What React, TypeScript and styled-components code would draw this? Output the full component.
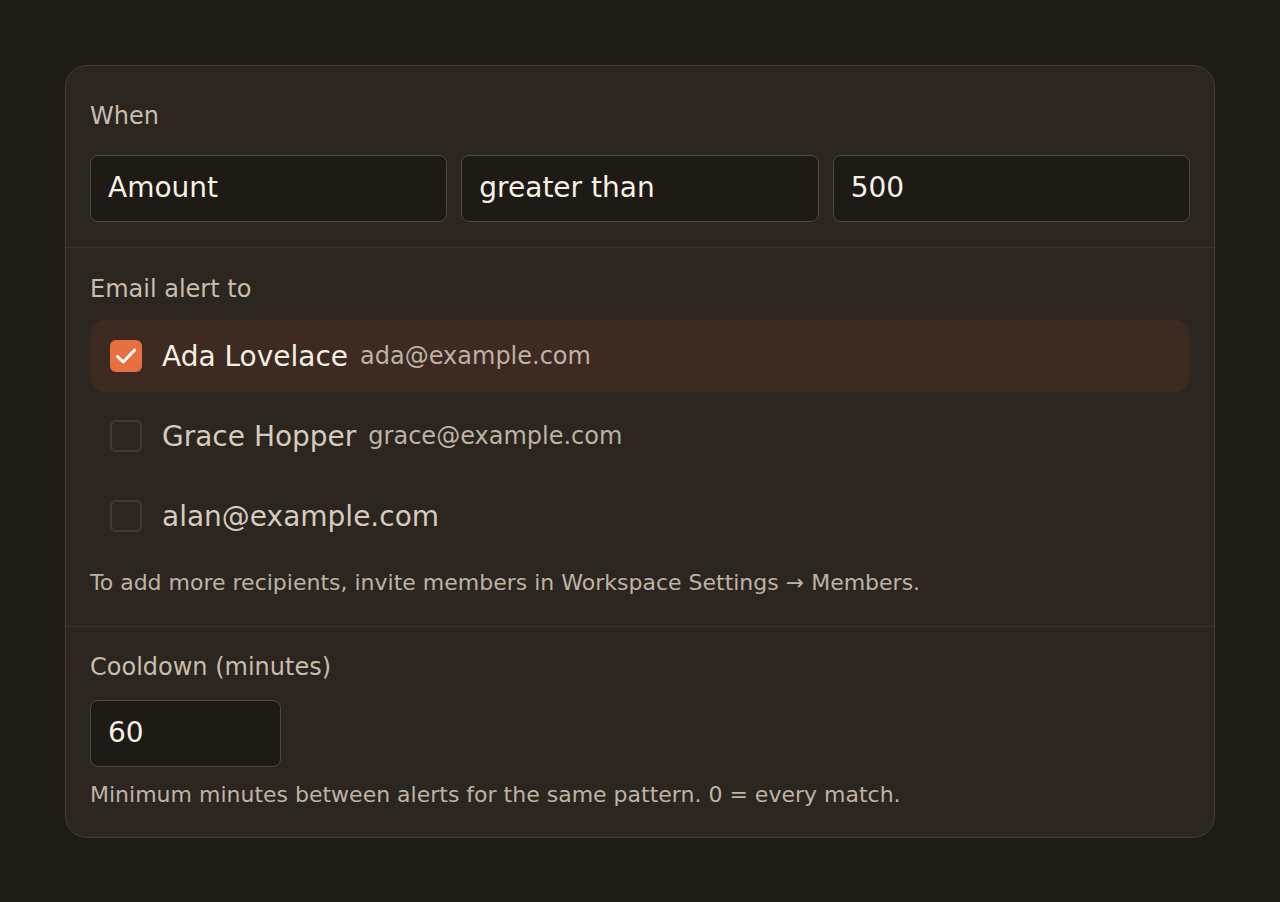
import React, { useState } from "react";
import styled, { createGlobalStyle } from "styled-components";

const GlobalStyle = createGlobalStyle`
  html, body {
    margin: 0;
    padding: 0;
    background: #1f1b17;
  }
  body {
    font-family: "DejaVu Sans", "Noto Sans", sans-serif;
    -webkit-font-smoothing: antialiased;
  }
  * { box-sizing: border-box; }
`;

const Page = styled.div`
  padding: 65px;
  min-height: 902px;
  background: #1f1b17;
`;

const Card = styled.div`
  background: #2b2620;
  border: 1px solid #453d34;
  border-radius: 22px;
  overflow: hidden;
`;

const Section = styled.section<{ $top: number; $bottom: number }>`
  padding: ${(p) => p.$top}px 24px ${(p) => p.$bottom}px;
  & + & {
    border-top: 1px solid #3b342d;
  }
`;

const Label = styled.div<{ $gap: number }>`
  font-size: 24px;
  line-height: 36px;
  color: #c9bdae;
  margin-bottom: ${(p) => p.$gap}px;
`;

const ConditionRow = styled.div`
  display: grid;
  grid-template-columns: repeat(3, 1fr);
  gap: 14px;
`;

const Field = styled.input<{ $width?: number }>`
  display: block;
  width: ${(p) => (p.$width ? `${p.$width}px` : "100%")};
  height: 67px;
  margin: 0;
  padding: 0 17px 3px;
  background: #1e1a16;
  border: 1px solid #52483c;
  border-radius: 8px;
  color: #f7f1e8;
  font-family: "DejaVu Sans", "Noto Sans", sans-serif;
  font-size: 28px;
  outline: none;
`;

const RecipientList = styled.div`
  display: flex;
  flex-direction: column;
  gap: 8px;
`;

const Recipient = styled.label<{ $checked: boolean }>`
  display: flex;
  align-items: center;
  gap: 20px;
  height: 72px;
  padding: 0 20px;
  border-radius: 16px;
  background: ${(p) => (p.$checked ? "#3d2b22" : "transparent")};
  cursor: pointer;
`;

const Box = styled.span<{ $checked: boolean }>`
  flex: none;
  width: 32px;
  height: 32px;
  border-radius: 6px;
  background: ${(p) => (p.$checked ? "#e86f42" : "transparent")};
  border: ${(p) => (p.$checked ? "none" : "2px solid #453b31")};
  display: flex;
  align-items: center;
  justify-content: center;
`;

const Name = styled.span<{ $checked: boolean }>`
  font-size: 28px;
  color: ${(p) => (p.$checked ? "#f6efe6" : "#d6cbbd")};
`;

const Email = styled.span`
  font-size: 24px;
  color: #beb2a3;
  margin-left: -8px;
`;

const Hint = styled.p<{ $top: number }>`
  margin: ${(p) => p.$top}px 0 0;
  font-size: 22px;
  line-height: 33px;
  color: #bfb3a4;
`;

type Person = { id: string; name?: string; email: string };

const people: Person[] = [
  { id: "ada", name: "Ada Lovelace", email: "ada@example.com" },
  { id: "grace", name: "Grace Hopper", email: "grace@example.com" },
  { id: "alan", email: "alan@example.com" },
];

const Check = () => (
  <svg width="32" height="32" viewBox="0 0 32 32" fill="none">
    <polyline
      points="7.5,16.5 13.2,22 24.5,10.2"
      stroke="#ffffff"
      strokeWidth="3"
      strokeLinecap="round"
      strokeLinejoin="round"
    />
  </svg>
);

export default function App() {
  const [selected, setSelected] = useState<Record<string, boolean>>({ ada: true });

  return (
    <>
      <GlobalStyle />
      <Page>
        <Card>
          <Section $top={32} $bottom={25}>
            <Label $gap={21}>When</Label>
            <ConditionRow>
              <Field defaultValue="Amount" readOnly />
              <Field defaultValue="greater than" readOnly />
              <Field defaultValue="500" readOnly />
            </ConditionRow>
          </Section>

          <Section $top={23} $bottom={27}>
            <Label $gap={13}>Email alert to</Label>
            <RecipientList>
              {people.map((p) => {
                const on = !!selected[p.id];
                return (
                  <Recipient
                    key={p.id}
                    $checked={on}
                    onClick={() => setSelected((s) => ({ ...s, [p.id]: !s[p.id] }))}
                  >
                    <Box $checked={on}>{on && <Check />}</Box>
                    {p.name ? (
                      <>
                        <Name $checked={on}>{p.name}</Name>
                        <Email>{p.email}</Email>
                      </>
                    ) : (
                      <Name $checked={on}>{p.email}</Name>
                    )}
                  </Recipient>
                );
              })}
            </RecipientList>
            <Hint $top={14}>
              To add more recipients, invite members in Workspace Settings → Members.
            </Hint>
          </Section>

          <Section $top={22} $bottom={26}>
            <Label $gap={15}>Cooldown (minutes)</Label>
            <Field $width={191} defaultValue="60" readOnly />
            <Hint $top={11}>
              Minimum minutes between alerts for the same pattern. 0 = every match.
            </Hint>
          </Section>
        </Card>
      </Page>
    </>
  );
}
